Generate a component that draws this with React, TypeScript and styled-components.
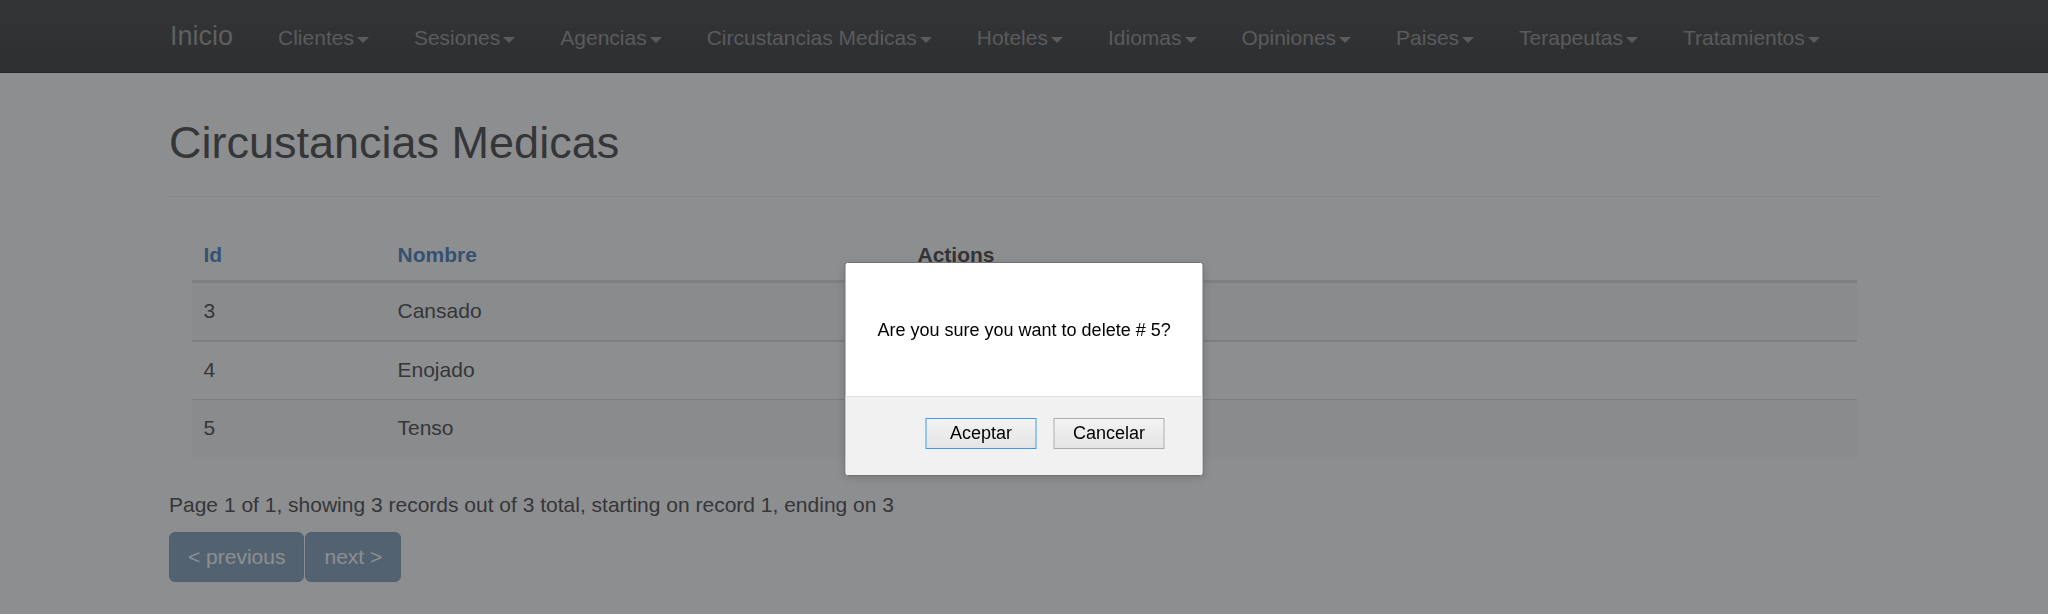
import styled, { createGlobalStyle } from 'styled-components'

const GlobalStyle = createGlobalStyle`
  html, body {
    margin: 0;
    padding: 0;
  }
  body {
    background: #fff;
    color: #333;
    font-family: "Liberation Sans", Arial, Helvetica, sans-serif;
    font-size: 21px;
    line-height: 30px;
  }
  * {
    box-sizing: border-box;
  }
`

const Navbar = styled.nav`
  height: 73px;
  background: linear-gradient(#2a2a2a, #1e1e1e);
  border-bottom: 1px solid #080808;
`

const Container = styled.div`
  width: 1755px;
  margin: 0 auto;
  padding: 0 22.5px;
`

const NavInner = styled(Container)`
  display: flex;
  align-items: flex-start;
`

const Brand = styled.a`
  font-size: 27px;
  line-height: 30px;
  padding: 21px 22.5px 21px 1px;
  color: #909090;
`

const NavLink = styled.a`
  display: flex;
  align-items: center;
  padding: 23px 22.5px 19px;
  line-height: 30px;
  color: #858585;
  white-space: nowrap;
`

const Caret = styled.span`
  display: inline-block;
  width: 0;
  height: 0;
  margin-left: 3px;
  margin-top: 3px;
  border-top: 6px solid #858585;
  border-left: 6px solid transparent;
  border-right: 6px solid transparent;
`

const PageHeader = styled.div`
  margin-top: 45px;
  padding-bottom: 28px;
  border-bottom: 1px solid #eee;
`

const Title = styled.h2`
  margin: 0;
  font-size: 45px;
  line-height: 49.5px;
  font-weight: 500;
  color: #2e2e2e;
`

const TableWrap = styled.div`
  padding: 0 22.5px;
  margin-top: 32px;
  margin-bottom: 33px;
`

const Table = styled.table`
  width: 100%;
  border-collapse: separate;
  border-spacing: 0;
  table-layout: fixed;
`

const Th = styled.th<{ $width?: number; $link?: boolean }>`
  width: ${p => (p.$width ? `${p.$width}px` : 'auto')};
  text-align: left;
  font-weight: bold;
  padding: 11px 12px 10px;
  border-bottom: 3px solid #ddd;
  color: ${p => (p.$link ? '#2b6fb3' : '#2a2a2a')};
`

const Tr = styled.tr<{ $striped?: boolean; $line: number }>`
  background: ${p => (p.$striped ? '#f7f7f7' : 'transparent')};

  td {
    border-top: ${p => p.$line}px solid #d8d8d8;
  }
`

const Td = styled.td`
  padding: 13px 12px 14px;
  color: #2e2e2e;
`

const Summary = styled.p`
  margin: 0 0 12px;
  color: #2e2e2e;
`

const Pager = styled.div`
  display: flex;
  gap: 1px;
`

const PagerButton = styled.span`
  display: inline-block;
  padding: 9px 18px;
  line-height: 30px;
  color: #fff;
  background: #2a5f90;
  border: 1px solid #265783;
  border-radius: 6px;
  opacity: 0.65;
`

const Backdrop = styled.div`
  position: fixed;
  inset: 0;
  z-index: 1000;
  background: rgba(58, 60, 63, 0.58);
`

const Dialog = styled.div`
  position: fixed;
  z-index: 1001;
  top: 262px;
  left: 50%;
  transform: translateX(-50%);
  width: 359px;
  background: #fff;
  border: 1px solid #727272;
  border-radius: 3px;
  overflow: hidden;
  font-family: "Liberation Sans", Arial, sans-serif;
  box-shadow: 0 2px 8px rgba(0, 0, 0, 0.15);
`

const DialogBody = styled.div`
  height: 133px;
  display: flex;
  align-items: center;
  padding-left: 32px;
  font-size: 18px;
  color: #000;
`

const DialogFooter = styled.div`
  height: 79px;
  display: flex;
  justify-content: flex-end;
  align-items: flex-start;
  gap: 17px;
  padding: 21px 38px 0 0;
  background: #f1f1f1;
  border-top: 1px solid #e0e0e0;
`

const DialogButton = styled.button<{ $focused?: boolean }>`
  width: 111px;
  height: 31px;
  padding: 0;
  font-family: "Liberation Sans", Arial, sans-serif;
  font-size: 18px;
  color: #000;
  background: linear-gradient(#f3f3f3, #e4e4e4);
  border: 1px solid ${p => (p.$focused ? '#3d9af0' : '#adadad')};
  border-radius: 0;
`

const menus = [
  'Clientes',
  'Sesiones',
  'Agencias',
  'Circustancias Medicas',
  'Hoteles',
  'Idiomas',
  'Opiniones',
  'Paises',
  'Terapeutas',
  'Tratamientos'
]

const rows = [
  { id: 3, nombre: 'Cansado' },
  { id: 4, nombre: 'Enojado' },
  { id: 5, nombre: 'Tenso' }
]

// 1.5px borders rounded to device pixels in the screenshot
const rowLines = [0, 2, 1]

export default function App() {
  return (
    <>
      <GlobalStyle />
      <Navbar>
        <NavInner>
          <Brand>Inicio</Brand>
          {menus.map(m => (
            <NavLink key={m}>
              {m}
              <Caret />
            </NavLink>
          ))}
        </NavInner>
      </Navbar>
      <Container>
        <PageHeader>
          <Title>Circustancias Medicas</Title>
        </PageHeader>
        <TableWrap>
          <Table>
            <thead>
              <tr>
                <Th $width={194} $link>
                  Id
                </Th>
                <Th $width={520} $link>
                  Nombre
                </Th>
                <Th>Actions</Th>
              </tr>
            </thead>
            <tbody>
              {rows.map((r, i) => (
                <Tr key={r.id} $striped={i % 2 === 0} $line={rowLines[i]}>
                  <Td>{r.id}</Td>
                  <Td>{r.nombre}</Td>
                  <Td />
                </Tr>
              ))}
            </tbody>
          </Table>
        </TableWrap>
        <Summary>
          Page 1 of 1, showing 3 records out of 3 total, starting on record 1,
          ending on 3
        </Summary>
        <Pager>
          <PagerButton>&lt; previous</PagerButton>
          <PagerButton>next &gt;</PagerButton>
        </Pager>
      </Container>
      <Backdrop />
      <Dialog>
        <DialogBody>Are you sure you want to delete # 5?</DialogBody>
        <DialogFooter>
          <DialogButton $focused>Aceptar</DialogButton>
          <DialogButton>Cancelar</DialogButton>
        </DialogFooter>
      </Dialog>
    </>
  )
}
